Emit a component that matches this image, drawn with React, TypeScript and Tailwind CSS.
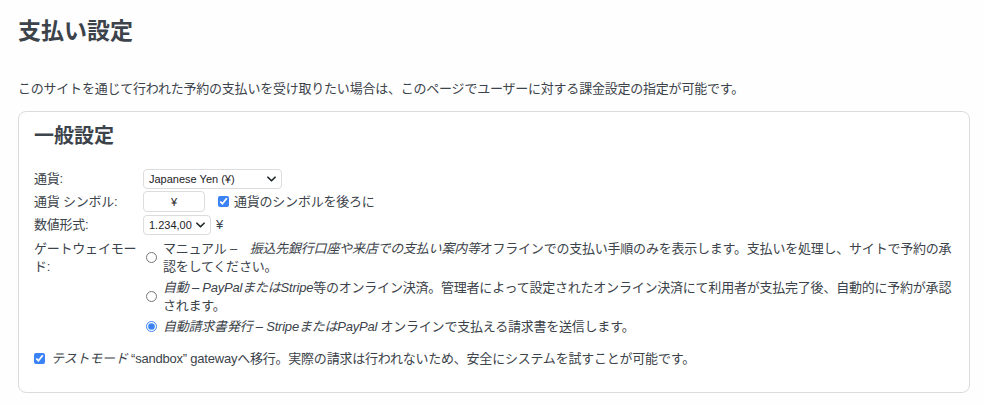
import { useState } from "react";

const font = "font-['Liberation_Sans','Noto_Sans_CJK_JP',sans-serif]";

function Chevron() {
  return (
    <svg
      viewBox="0 0 10 6"
      className="pointer-events-none absolute right-[6px] top-1/2 h-[6px] w-[9px] -translate-y-1/2"
      fill="none"
      stroke="#1d2327"
      strokeWidth="1.8"
      strokeLinecap="round"
      strokeLinejoin="round"
    >
      <path d="M1 1l4 4 4-4" />
    </svg>
  );
}

function Select({ value, options, width }: { value: string; options: string[]; width: string }) {
  return (
    <div className={`relative inline-block ${width}`}>
      <select
        defaultValue={value}
        className={`h-[20px] w-full appearance-none rounded-[4px] border border-[#dcdcde] bg-white pl-[5px] pr-[16px] text-[11px] leading-[18px] tracking-normal text-[#1d2327] ${font}`}
      >
        {options.map((o) => (
          <option key={o}>{o}</option>
        ))}
      </select>
      <Chevron />
    </div>
  );
}

const gateways = [
  {
    id: "manual",
    parts: [
      { t: "マニュアル –\u3000", i: false },
      { t: "振込先銀行口座や来店での支払い案内等", i: true },
      { t: "オフラインでの支払い手順のみを表示します。支払いを処理し、サイトで予約の承認をしてください。", i: false },
    ],
  },
  {
    id: "auto",
    parts: [
      { t: "自動 – PayPalまたはStripe", i: true },
      { t: "等のオンライン決済。管理者によって設定されたオンライン決済にて利用者が支払完了後、自動的に予約が承認されます。", i: false },
    ],
  },
  {
    id: "invoice",
    parts: [
      { t: "自動請求書発行 – StripeまたはPayPal", i: true },
      { t: " オンラインで支払える請求書を送信します。", i: false },
    ],
  },
];

export default function App() {
  const [mode, setMode] = useState("invoice");

  return (
    <div className={`min-h-screen bg-[#fefefe] pl-[18px] pr-[14px] pt-[15px] text-[13px] tracking-[-0.22px] text-[#3c434a] ${font}`}>
      <h1 className="text-[23px] font-bold leading-[32px] tracking-normal text-[#3c434a]">支払い設定</h1>
      <p className="mt-[33px] leading-[18px]">
        このサイトを通じて行われた予約の支払いを受け取りたい場合は、このページでユーザーに対する課金設定の指定が可能です。
      </p>

      <section className="mt-[13px] h-[282px] rounded-[8px] border border-[#dcdcde] bg-white pl-[15px] pr-[14px] pt-[12px]">
        <h2 className="text-[20px] font-bold leading-[24px] tracking-normal text-[#3c434a]">一般設定</h2>

        <table className="mt-[20px] border-collapse">
          <tbody>
            <tr>
              <td className="w-[109px] py-[1px] align-middle leading-[18px]">通貨:</td>
              <td className="py-[1px]">
                <Select value="Japanese Yen (¥)" options={["Japanese Yen (¥)", "US Dollar ($)", "Euro (€)"]} width="w-[139px]" />
              </td>
            </tr>
            <tr>
              <td className="py-[1px] leading-[18px]">通貨 シンボル:</td>
              <td className="py-[1px]">
                <div className="flex items-center">
                  <input
                    defaultValue="¥"
                    className="h-[21px] w-[62px] rounded-[4px] border border-[#dcdcde] bg-white text-center text-[11px] text-[#1d2327]"
                  />
                  <label className="ml-[13px] flex items-center gap-[5px] leading-[18px]">
                    <input type="checkbox" defaultChecked className="m-0 h-[11px] w-[11px] accent-[#3b82f6]" />
                    通貨のシンボルを後ろに
                  </label>
                </div>
              </td>
            </tr>
            <tr>
              <td className="py-[2px] leading-[18px]">数値形式:</td>
              <td className="py-[2px]">
                <div className="flex items-center gap-[5px]">
                  <Select value="1.234,00" options={["1.234,00", "1,234.00", "1 234,00"]} width="w-[68px]" />
                  <span className="leading-[18px]">¥</span>
                </div>
              </td>
            </tr>
            <tr>
              <td className="w-[109px] pt-[3px] align-top leading-[18px]">ゲートウェイモード:</td>
              <td className="pt-[3px]">
                <div className="flex flex-col gap-[4px]">
                  {gateways.map((g) => (
                    <label key={g.id} className="flex items-center gap-[6px] pl-[3px]">
                      <input
                        type="radio"
                        name="gateway"
                        checked={mode === g.id}
                        onChange={() => setMode(g.id)}
                        className="m-0 h-[11px] w-[11px] shrink-0 accent-[#3b82f6]"
                      />
                      <span className="leading-[17.5px]">
                        {g.parts.map((p, idx) =>
                          p.i ? (
                            <em key={idx} className="italic">
                              {p.t}
                            </em>
                          ) : (
                            <span key={idx}>{p.t}</span>
                          )
                        )}
                      </span>
                    </label>
                  ))}
                </div>
              </td>
            </tr>
          </tbody>
        </table>

        <label className="mt-[14px] flex items-center gap-[6px] leading-[17.5px]">
          <input type="checkbox" defaultChecked className="m-0 h-[11px] w-[11px] accent-[#3b82f6]" />
          <span>
            <em className="italic">テストモード</em> “sandbox” gatewayへ移行。実際の請求は行われないため、安全にシステムを試すことが可能です。
          </span>
        </label>
      </section>
    </div>
  );
}
